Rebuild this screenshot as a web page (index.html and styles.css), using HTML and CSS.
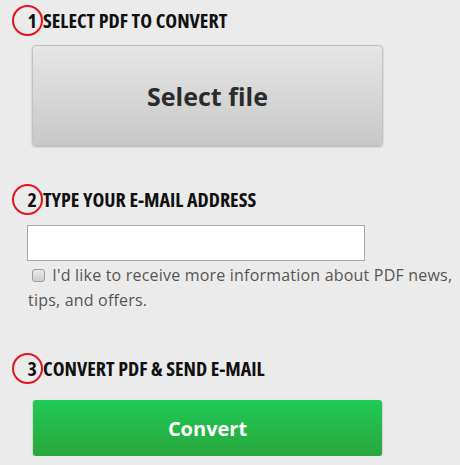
FILE: index.html
```html
<!DOCTYPE html>
<html lang="en">
<head>
  <meta charset="UTF-8">
  <meta name="viewport" content="width=device-width, initial-scale=1.0">
  <title>PDF to E-mail</title>
  <link rel="stylesheet" href="styles.css">
</head>
<body>
  <!-- Step 1: pick the file -->
  <h2 class="step-title"><span class="step-num">1</span>SELECT PDF TO CONVERT</h2>
  <button class="select-btn">Select file</button>

  <!-- Step 2: where to send it -->
  <h2 class="step-title step-gap"><span class="step-num">2</span>TYPE YOUR E-MAIL ADDRESS</h2>
  <input type="text" class="email-input">
  <p class="optin">
    <input type="checkbox" class="optin-box"> I'd like to receive more information about PDF news, tips, and offers.
  </p>

  <!-- Step 3: go -->
  <h2 class="step-title step-gap-last"><span class="step-num">3</span>CONVERT PDF &amp; SEND E-MAIL</h2>
  <button class="convert-btn">Convert</button>
</body>
</html>
```

FILE: styles.css
```css
body {
  margin: 0;
  padding-top: 5px;
  background-color: #ebebeb;
  font-family: "Open Sans", "DejaVu Sans", sans-serif;
  color: #333;
}
.step-title {
  display: flex;
  align-items: center;
  height: 31px;
  margin: 0;
  padding-left: 12px;
  font-size: 20px;
  font-weight: 700;
  font-stretch: 75%;
  color: #111;
}
.step-num {
  box-sizing: border-box;
  width: 31px;
  height: 31px;
  border: 2px solid #e3141e;
  border-radius: 50%;
  display: flex;
  align-items: center;
  justify-content: flex-end;
  padding-right: 4px;
}
.step-gap {
  margin-top: 38px;
}
.step-gap-last {
  margin-top: 40px;
}
.select-btn {
  display: block;
  box-sizing: border-box;
  width: 351px;
  height: 101px;
  margin: 9px 0 0 32px;
  background: linear-gradient(#e6e6e6, #c8c8c8);
  border: 1px solid #c2c2c2;
  border-radius: 4px;
  box-shadow: 0 1px 2px rgba(0,0,0,0.25);
  font-family: "Open Sans", sans-serif;
  font-size: 25px;
  font-weight: 700;
  color: #2b2b2b;
  cursor: pointer;
}
.email-input {
  display: block;
  box-sizing: border-box;
  width: 338px;
  height: 36px;
  margin: 10px 0 0 27px;
  background: #fff;
  border: 1px solid #a8a8a8;
}
.optin {
  margin: 2px 0 0 28px;
  font-size: 16px;
  line-height: 25px;
  letter-spacing: 0.2px;
  color: #555;
}
.optin-box {
  -webkit-appearance: none;
  appearance: none;
  box-sizing: border-box;
  width: 13px;
  height: 13px;
  margin: 0 3px 0 4px;
  vertical-align: -1px;
  border: 1px solid #9e9e9e;
  border-radius: 3px;
  background: linear-gradient(#e8e8e8, #cfcfcf);
}
.convert-btn {
  display: block;
  box-sizing: border-box;
  width: 349px;
  height: 56px;
  margin: 16px 0 0 33px;
  background: linear-gradient(#1fca56, #2aa63d);
  border: none;
  border-radius: 3px;
  box-shadow: 0 1px 2px rgba(0,0,0,0.3);
  font-family: "Open Sans", sans-serif;
  font-size: 20px;
  font-weight: 700;
  color: #fff;
  cursor: pointer;
}
```
